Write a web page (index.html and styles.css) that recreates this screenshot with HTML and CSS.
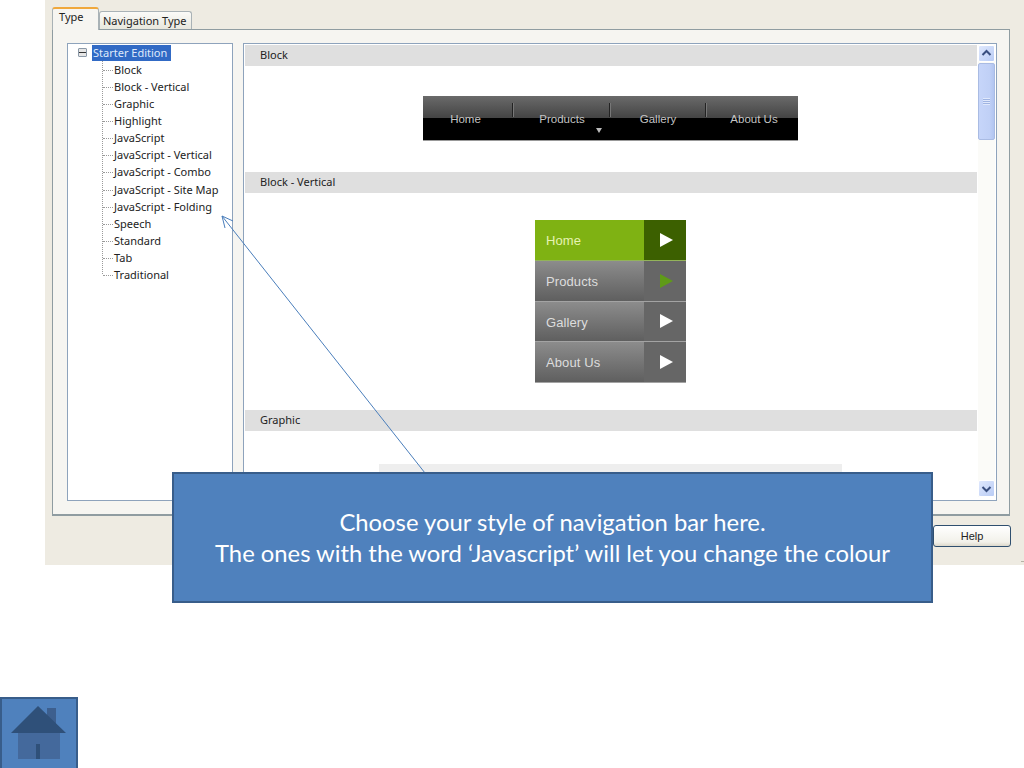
FILE: index.html
```html
<!DOCTYPE html>
<html lang="en">
<head>
<meta charset="utf-8">
<title>Navigation bar style</title>
<link rel="stylesheet" href="styles.css">
</head>
<body>
<div class="window">
  <div class="tabs">
    <div class="tab active">Type</div>
    <div class="tab">Navigation Type</div>
  </div>
  <div class="panel">
    <div class="tree">
      <div class="root"><span class="minus"></span><span class="root-label">Starter Edition</span></div>
      <ul class="items">
        <li>Block</li>
        <li>Block - Vertical</li>
        <li>Graphic</li>
        <li>Highlight</li>
        <li>JavaScript</li>
        <li>JavaScript - Vertical</li>
        <li>JavaScript - Combo</li>
        <li>JavaScript - Site Map</li>
        <li>JavaScript - Folding</li>
        <li>Speech</li>
        <li>Standard</li>
        <li>Tab</li>
        <li>Traditional</li>
      </ul>
    </div>
    <div class="preview">
      <div class="sections">
        <div class="head">Block</div>
        <div class="body body-block">
          <div class="hnav">
            <div class="hcell c1">Home</div>
            <div class="hcell c2">Products<span class="drop"></span></div>
            <div class="hcell c3">Gallery</div>
            <div class="hcell c4">About Us</div>
          </div>
        </div>
        <div class="head">Block - Vertical</div>
        <div class="body body-vert">
          <div class="vnav">
            <div class="vrow on"><span class="vlabel">Home</span><span class="varrow"><i class="tri"></i></span></div>
            <div class="vrow"><span class="vlabel">Products</span><span class="varrow"><i class="tri green"></i></span></div>
            <div class="vrow"><span class="vlabel">Gallery</span><span class="varrow"><i class="tri"></i></span></div>
            <div class="vrow"><span class="vlabel">About Us</span><span class="varrow"><i class="tri"></i></span></div>
          </div>
        </div>
        <div class="head">Graphic</div>
        <div class="body body-graphic"><div class="gbar"></div></div>
      </div>
      <div class="scrollbar">
        <div class="sbtn"><svg width="17" height="17" viewBox="0 0 17 17"><path d="M4.5 10 L8.5 6 L12.5 10" fill="none" stroke="#3a4f7f" stroke-width="2"/></svg></div>
        <div class="thumb"><span class="grip"></span></div>
        <div class="track"></div>
        <div class="sbtn"><svg width="17" height="17" viewBox="0 0 17 17"><path d="M4.5 7 L8.5 11 L12.5 7" fill="none" stroke="#3a4f7f" stroke-width="2"/></svg></div>
      </div>
    </div>
  </div>
  <div class="footer"><div class="help">Help</div></div>
  <span class="resize"></span>
</div>

<svg class="pointer" width="1024" height="768" viewBox="0 0 1024 768">
  <path d="M425 473 L222 216 M222 216 L233 221 M222 216 L225 228" fill="none" stroke="#4a7ebb" stroke-width="1"/>
</svg>

<div class="callout">
  <p>Choose your style of navigation bar here.</p>
  <p>The ones with the word ‘Javascript’ will let you change the colour</p>
</div>

<div class="home">
  <svg width="78" height="71" viewBox="0 0 78 71">
    <rect x="18" y="34" width="42" height="28" fill="#44699c"/>
    <rect x="47" y="11" width="9" height="18" fill="#3d5f8e"/>
    <path d="M11 36 L38 9 L66 36 Z" fill="#2f5079"/>
    <rect x="36" y="47" width="4" height="15" fill="#2f5079"/>
  </svg>
</div>
</body>
</html>
```
FILE: styles.css
```css
html, body {
  margin: 0;
  padding: 0;
  background: #fff;
  height: 768px;
  overflow: hidden;
}
body {
  position: relative;
  font-family: "Noto Sans", "Liberation Sans", sans-serif;
  font-size: 11px;
  color: #222;
}
.window {
  position: relative;
  margin-left: 45px;
  width: 979px;
  height: 565px;
  background: #eeebe2;
  padding: 7px 0 0 7px;
  box-sizing: border-box;
  display: flex;
  flex-direction: column;
}
.resize {
  position: absolute;
  right: 0;
  bottom: 3px;
  width: 3px;
  height: 1px;
  background: #b5b2a6;
}
.tabs {
  display: flex;
  align-items: flex-end;
  height: 22px;
}
.tab {
  height: 18px;
  line-height: 17px;
  padding: 0 3px 0 3px;
  background: linear-gradient(#fbfbf8, #e8e7de);
  border: 1px solid #a9b2b6;
  border-bottom: 0;
  border-radius: 3px 3px 0 0;
  box-sizing: border-box;
  width: 93px;
  white-space: nowrap;
}
.tab.active {
  width: 47px;
  background: #f6f5f1;
  border-top: 2px solid #f0a83c;
  padding-left: 6px;
  line-height: 15px;
  position: relative;
  z-index: 1;
  margin-bottom: -1px;
  height: 23px;
}
.panel {
  width: 958px;
  height: 487px;
  background: #f6f5f1;
  border: 1px solid #8f9ca1;
  border-bottom-width: 2px;
  box-sizing: border-box;
  padding: 13px 0 0 14px;
  display: flex;
  gap: 10px;
}
.tree {
  width: 166px;
  height: 458px;
  flex: none;
  background: #fff;
  border: 1px solid #8ea3bc;
  box-sizing: border-box;
  padding: 0 0 0 10px;
}
.root {
  display: flex;
  align-items: center;
  height: 17px;
}
.minus {
  width: 9px;
  height: 9px;
  border: 1px solid #8b99a8;
  box-sizing: border-box;
  border-radius: 1px;
  background: linear-gradient(to bottom, #e6e6e6 0 3px, #333 3px 4px, #e6e6e6 4px);
  margin-right: 5px;
}
.root-label {
  background: #316ac5;
  color: #dfe9fb;
  height: 16px;
  line-height: 15px;
  padding: 0 4px 0 1px;
  white-space: nowrap;
}
.items {
  list-style: none;
  margin: 0 0 0 24px;
  padding: 0;
  border-left: 1px dotted #9a9a9a;
  height: 213px;
}
.items li {
  position: relative;
  height: 17.08px;
  line-height: 17px;
  padding-left: 11px;
  white-space: nowrap;
}
.items li::before {
  content: "";
  position: absolute;
  left: 0;
  top: 9px;
  width: 10px;
  border-top: 1px dotted #9a9a9a;
}
.preview {
  width: 754px;
  height: 458px;
  flex: none;
  background: #fff;
  border: 1px solid #8ea3bc;
  box-sizing: border-box;
  padding: 1px;
  display: flex;
  gap: 1px;
  overflow: hidden;
}
.sections {
  width: 732px;
  flex: none;
  overflow: hidden;
}
.head {
  height: 21px;
  line-height: 20px;
  background: #dfdfdf;
  padding-left: 15px;
}
.body {
  display: flex;
  justify-content: center;
  box-sizing: border-box;
  padding-right: 1px;
}
.body-block { height: 106px; padding-top: 30px; }
.body-vert { height: 217px; padding-top: 27px; }
.body-graphic { height: 60px; padding-top: 33px; }
.hnav {
  width: 375px;
  height: 45px;
  display: flex;
  background: linear-gradient(#6a6a6a 0, #444 22px, #000 22px, #000 44px, #999 44px);
  font-family: "Liberation Sans", sans-serif;
  color: #c4c4c4;
  font-size: 11.5px;
}
.hcell {
  position: relative;
  box-sizing: border-box;
  text-align: center;
  line-height: 46px;
  white-space: nowrap;
}
.c1 { width: 89px; padding-right: 4px; }
.c2 { width: 97px; padding-left: 3px; }
.c3 { width: 96px; padding-left: 2px; }
.c4 { width: 93px; padding-left: 5px; }
.c2::before, .c3::before, .c4::before {
  content: "";
  position: absolute;
  left: 0;
  top: 7px;
  height: 14px;
  border-left: 1px solid #222;
  border-right: 1px solid #777;
}
.drop {
  position: absolute;
  left: 84px;
  top: 32px;
  border-left: 3px solid transparent;
  border-right: 3px solid transparent;
  border-top: 5px solid #bbb;
}
.vnav {
  width: 151px;
  height: 163px;
  display: flex;
  flex-direction: column;
  font-family: "Liberation Sans", sans-serif;
  font-size: 13px;
  letter-spacing: 0.1px;
  color: #ddd;
}
.vrow {
  height: 40.75px;
  display: flex;
  box-sizing: border-box;
  border-bottom: 1px solid #a3a3a3;
  background: linear-gradient(#8c8c8c, #5f5f5f);
}
.vlabel {
  flex: 1;
  line-height: 41px;
  padding-left: 11px;
}
.varrow {
  width: 42px;
  padding-left: 3px;
  box-sizing: border-box;
  background: #666;
  display: flex;
  align-items: center;
  justify-content: center;
}
.tri {
  border-left: 13px solid #fff;
  border-top: 7.5px solid transparent;
  border-bottom: 7.5px solid transparent;
}
.tri.green { border-left-color: #5f9a18; }
.vrow.on {
  background: #7fb213;
  color: #e6f3b4;
  border-bottom-color: #93b35a;
}
.vrow.on .varrow { background: #3c6000; }
.gbar {
  width: 463px;
  height: 30px;
  background: #eeeeee;
}
.scrollbar {
  width: 17px;
  height: 452px;
  display: flex;
  flex-direction: column;
  background: #fbfbf8;
  flex: none;
}
.sbtn {
  width: 17px;
  height: 17px;
  flex: none;
  background: linear-gradient(135deg, #dfe8fd, #b9ccf5);
  border: 1px solid #fff;
  border-radius: 2px;
  box-sizing: border-box;
  overflow: hidden;
}
.sbtn svg { display: block; margin: -1px; }
.thumb {
  height: 77px;
  flex: none;
  margin-top: 1px;
  background: linear-gradient(90deg, #c6d5f9, #c0d0f6 70%, #b2c5f0);
  border: 1px solid #a9bbe3;
  border-radius: 2px;
  box-sizing: border-box;
  display: flex;
  align-items: center;
  justify-content: center;
}
.grip {
  width: 7px;
  height: 7px;
  background: repeating-linear-gradient(#dfe8fc 0 1px, #9fb4e2 1px 2px);
}
.track { flex: 1; }
.footer {
  flex: 1;
  display: flex;
  justify-content: flex-end;
  padding: 9px 13px 0 0;
}
.help {
  width: 78px;
  height: 22px;
  box-sizing: border-box;
  border: 1px solid #2f4f6f;
  border-radius: 3px;
  background: linear-gradient(#ffffff, #f2f1ea 80%, #dcd8cb);
  text-align: center;
  line-height: 20px;
  color: #222;
  font-family: "Liberation Sans", sans-serif;
  font-size: 11px;
}
.pointer {
  position: absolute;
  left: 0;
  top: 0;
  pointer-events: none;
}
.callout {
  position: absolute;
  left: 172px;
  top: 472px;
  width: 761px;
  height: 131px;
  box-sizing: border-box;
  background: #4f81bd;
  border: 2px solid #385d8a;
  color: #fff;
  font-family: "Lato", sans-serif;
  font-size: 23.8px;
  line-height: 31px;
  text-align: center;
  padding-top: 33px;
}
.callout p { margin: 0; white-space: nowrap; }
.home {
  position: absolute;
  left: 0;
  top: 697px;
  width: 78px;
  height: 71px;
  box-sizing: border-box;
  background: #4f81bd;
  border: 2px solid #385d8a;
  border-bottom: 0;
  overflow: hidden;
}
.home svg { display: block; margin: -2px; }
```
